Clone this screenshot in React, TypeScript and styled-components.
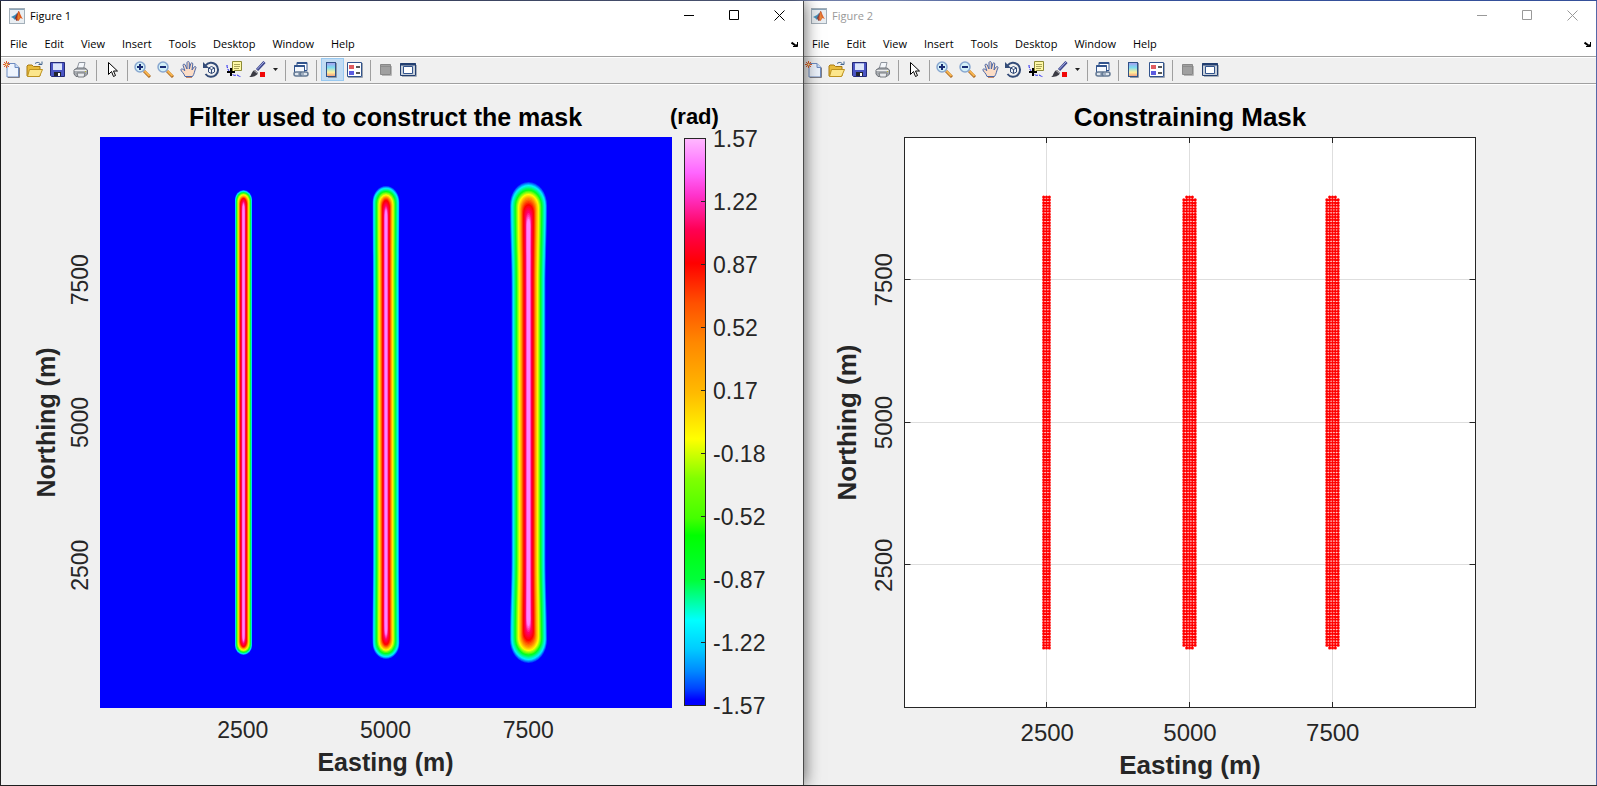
import type { ReactNode } from 'react';
import styled, { createGlobalStyle } from 'styled-components';

const GlobalStyle = createGlobalStyle`
  * {
    box-sizing: border-box;
  }

  body {
    margin: 0;
    background: #333;
    font-family: "Open Sans", "Noto Sans", sans-serif;
  }
`

const Desktop = styled.main`
  display: grid;
  grid-template-columns: 804fr 793fr;
  min-height: 100vh;
  padding: 1px 0;
  background: linear-gradient(to right, #35406a, #7482ac 56%, #35509a 65%, #35509a) top / 100% 1px no-repeat, #2b2b2b;
`

const FigureWindow = styled.section<{ $active?: boolean }>`
  display: flex;
  flex-direction: column;
  position: relative;
  z-index: ${({ $active }) => ($active ? 1 : 0)};
  min-width: 0;
  margin-left: ${({ $active }) => ($active ? '1px' : '-1px')};
  border-right: 1px solid ${({ $active }) => ($active ? '#4a4a4a' : '#5668a8')};
  background: #f0f0f0;
  box-shadow: ${({ $active }) => ($active ? '0 0 16px rgba(0, 0, 0, .65)' : 'none')};
`

const TitleBar = styled.header<{ $active?: boolean }>`
  display: flex;
  align-items: center;
  height: 29px;
  padding-left: 8px;
  background: #fff;
  color: ${({ $active }) => ($active ? '#000' : '#999')};
`

const WindowTitle = styled.h1`
  flex: 1;
  margin: 0;
  padding-left: 5px;
  font-size: 11px;
  font-weight: 400;
`

const WindowButton = styled.button`
  display: flex;
  justify-content: center;
  align-items: center;
  width: 45px;
  height: 29px;
  padding: 0 2px 0 0;
  border: none;
  background: transparent;
  color: inherit;

  &:hover {
    background: #e5e5e5;
  }
`

const MenuBar = styled.nav`
  display: flex;
  align-items: center;
  gap: 17px;
  height: 26px;
  padding: 2px 5px 0 9px;
  background: #fff;
`

const MenuButton = styled.button`
  padding: 0;
  border: none;
  background: transparent;
  font-family: inherit;
  font-size: 11px;
  line-height: 16px;
  color: #000;
`

const DockButton = styled.button`
  display: flex;
  margin-left: auto;
  padding: 0;
  border: none;
  background: transparent;
`

const ToolBar = styled.div`
  display: flex;
  align-items: center;
  height: 29px;
  border-top: 1px solid #a0a0a0;
  border-bottom: 1px solid #fff;
  background: #f0f0f0;
  box-shadow: inset 0 1px #fff, inset 0 -1px #a0a0a0;
`

const ToolButton = styled.button<{ $pressed?: boolean; $narrow?: boolean }>`
  display: flex;
  justify-content: center;
  align-items: center;
  width: ${({ $narrow }) => ($narrow ? '12px' : '23px')};
  height: 23px;
  margin-bottom: 2px;
  padding: 0 2px 0 0;
  border: 1px solid ${({ $pressed }) => ($pressed ? '#99c9f0' : 'transparent')};
  background: ${({ $pressed }) => ($pressed ? '#c2dcf3' : 'transparent')};

  &:hover {
    background: #d8e9f8;
  }
`

const Separator = styled.span`
  width: 1px;
  height: 21px;
  margin: 0 4px 0 3px;
  background: #a0a0a0;
`

const Chart = styled.svg`
  display: block;
  width: 100%;
  height: auto;
  font-family: "Liberation Sans", Arial, sans-serif;
`

const TickText = styled.text<{ $size: number }>`
  font-size: ${({ $size }) => $size}px;
  fill: #262626;
`

const LabelText = styled.text<{ $size: number; $title?: boolean }>`
  font-size: ${({ $size }) => $size}px;
  font-weight: 700;
  fill: ${({ $title }) => ($title ? '#000' : '#262626')};
`

const Icon = ({ children, size = 17 }: { children: ReactNode; size?: number }) => (
  <svg width={size} height={size} viewBox={`0 0 ${size} ${size}`} fill="none" aria-hidden="true">
    {children}
  </svg>
)

const MatlabIcon = ({ faded }: { faded?: boolean }) => (
  <Icon size={16}>
    <rect x=".5" y=".5" width="15" height="15" fill="#e9eef2" stroke="#a3afb9" />
    <path d="M1 1.500h14" stroke="#8ba4b8" />
    <g opacity={faded ? 0.9 : 1}>
      <path d="M2 9l4-2 2-2 1 3-3 4-2-2z" fill="#3987b5" />
      <path d="M6 10l2-4 1.500-3 1 1-1 8-2 1z" fill="#80302b" />
      <path d="M9.500 3c1.500 1 2.500 6 4.500 8l-2.500-1-2 3-2-2z" fill="#df5a1d" />
      <path d="M9.500 4l1 6-1 2z" fill="#f4a52d" />
    </g>
  </Icon>
)

const NewIcon = () => (
  <Icon>
    <path d="M4 2.500h8l3.500 3.500v10H4z" fill="#eef4fd" stroke="#6d8bc0" />
    <path d="M12 2.500v4h4" fill="#c5d9f4" stroke="#6d8bc0" />
    <path d="M16.500 6.500v10H5" stroke="#7d7d86" />
    <path d="M1 1l5 5M6 1L1 6M3.500 0v7M0 3.500h7" stroke="#e1602d" />
    <circle cx="3.500" cy="3.500" r="1.500" fill="#fff0a0" stroke="#d45a28" />
  </Icon>
)

const OpenIcon = () => (
  <Icon>
    <path d="M1 15V5l1-1h4l1.500 1.500H14V15z" fill="#e8bb3c" stroke="#a87a12" />
    <path d="M3.500 8.500h13L13.500 15.500h-12z" fill="#fce68b" stroke="#bd921f" />
    <path d="M9 2.500c3-2 5-1 5.500 1M12.500 3.500h3.500V.5" stroke="#41648e" />
  </Icon>
)

const SaveIcon = () => (
  <Icon>
    <path d="M1.500 1.500h14v14h-13l-1-1z" fill="#4b56c4" stroke="#252b78" />
    <path d="M4 2h9v7H4z" fill="#dce5fa" />
    <path d="M4 2h9v1H4z" fill="#a6b4ea" />
    <path d="M5 11h7v4H5z" fill="#22252f" />
    <path d="M9 12h2v3H9z" fill="#fff" />
  </Icon>
)

const PrintIcon = () => (
  <Icon>
    <path d="M5 8L7 1.500h6L11.500 8z" fill="#f4f7fb" stroke="#8f959e" />
    <path d="M2 9l3-2h8l2.500 2v4L13 15.500H4L2 13z" fill="#a9adb2" stroke="#6d7177" />
    <path d="M2.500 9.500h12" stroke="#ededed" />
    <path d="M5 12h8l-1 4H6z" fill="#e8eaed" stroke="#797c80" />
    <path d="M13 10.500h1" stroke="#c5bd2e" />
  </Icon>
)

const PointerIcon = () => (
  <Icon>
    <path d="M5.500 1.500v12l3-3 2 5 2-1-2-4.500h4z" fill="#fff" stroke="#000" />
  </Icon>
)

const ZoomIcon = ({ plus }: { plus?: boolean }) => (
  <Icon>
    <path d="M10 10l6 6" stroke="#a96720" strokeWidth="3" />
    <path d="M10.500 10l5 5" stroke="#f7b44e" strokeWidth="2" />
    <circle cx="6" cy="6" r="5" fill="#d3f0f7" stroke="#88a7d0" strokeWidth="1.500" />
    <path d={plus ? 'M3 6h6M6 3v6' : 'M3 6h6'} stroke="#182c74" strokeWidth="2" />
  </Icon>
)

const HandIcon = () => (
  <Icon>
    <path
      d="M5 15.500C4 12 1 10.500.8 8.500c.8-1 2.200-.5 4 1.200L3 4.200c.2-1.500 1.700-1.500 2.200-.2L7 8V1.500c.5-1.300 2-1.200 2.300 0V8l1.500-5.500c.6-1 2-.8 2 .5L12 9l2.300-3.200c1-.8 2 .2 1.600 1.200C14.500 9.500 14.500 13 12.500 15.500z"
      fill="#fbdcc5"
      stroke="#4a66a6"
    />
    <path d="M6 16.500h6" stroke="#c48869" />
  </Icon>
)

const RotateIcon = () => (
  <Icon>
    <path d="M2.500 4.500A7 7 0 1 1 2.500 13" stroke="#344c78" strokeWidth="2" />
    <path d="M0 1v6h6z" fill="#344c78" />
    <path d="M5.500 7l3-1.500 3 1.500v4l-3 1.500-3-1.500zM5.500 7l3 1.500 3-1.500M8.500 8.500v4" fill="#eef2f8" stroke="#344c78" />
  </Icon>
)

const DataTipIcon = () => (
  <Icon>
    <path d="M6.500.5h9v9h-7l-2 2z" fill="#fff9a6" stroke="#8d8a35" />
    <path d="M8 3.500h6M8 5.500h6M8 7.500h5" stroke="#a7a358" />
    <path d="M1 4c0 3 1 5 3 7 2 3 5 4 6 3s3 2 5 1.500" stroke="#1717f0" strokeDasharray="3 1" />
    <path d="M1 11h8M5 7v8" stroke="#000" strokeWidth="2" />
  </Icon>
)

const BrushIcon = () => (
  <Icon>
    <path d="M15.500 1L8 9" stroke="#3c458c" strokeWidth="3" />
    <path d="M15 1L8 8.500" stroke="#aab3e6" />
    <path d="M0 16c3-1 2-6 6-7l3 3c-1 3-5 4-9 4z" fill="#3b3b43" />
    <path d="M5 9.500l3.500 3" stroke="#bcbcc4" />
    <path d="M11 11h5v5h-5z" fill="#f00808" />
  </Icon>
)

const LinkIcon = () => (
  <Icon>
    <path d="M5 1.500h10v8H5z" fill="#fff" stroke="#32548d" />
    <path d="M2.500 4.500h10v7h-10z" fill="#f6f9fd" stroke="#32548d" />
    <path d="M5 2h10M2.500 5h10" stroke="#32548d" strokeWidth="2" />
    <rect x="2" y="11" width="8" height="4" rx="2" fill="#dfe6ee" stroke="#637893" strokeWidth="1.500" />
    <rect x="8" y="11" width="8" height="4" rx="2" fill="#dfe6ee" stroke="#637893" strokeWidth="1.500" />
    <path d="M6 13h6" stroke="#637893" />
  </Icon>
)

const ColorbarIcon = () => (
  <Icon>
    <defs>
      <linearGradient id="miniBar" x2="0" y2="1">
        <stop offset="0" stopColor="#a99af0" />
        <stop offset=".35" stopColor="#7bdcf0" />
        <stop offset=".7" stopColor="#fff19d" />
        <stop offset="1" stopColor="#f2987c" />
      </linearGradient>
    </defs>
    <path d="M13.500 2v14.500H5" stroke="#8f98a6" />
    <rect x="3.500" y="1.500" width="9" height="14" fill="url(#miniBar)" stroke="#2f5287" />
  </Icon>
)

const LegendIcon = () => (
  <Icon>
    <path d="M16.500 2v14.500H2" stroke="#9aa2ae" />
    <path d="M1.500 1.500h14v14h-14z" fill="#fff" stroke="#32548d" />
    <path d="M3 4h5v4H3z" fill="#e05c60" />
    <path d="M3 10h5v4H3z" fill="#5c5ce0" />
    <path d="M10 6h4M10 12h4" stroke="#222" strokeWidth="1.500" />
  </Icon>
)

const HideToolsIcon = () => (
  <Icon>
    <path d="M14.500 5v9.500H5" stroke="#b7b7b7" />
    <path d="M3.500 3.500h10v10h-10z" fill="#a0a0a0" stroke="#888" />
    <path d="M4 5.500h9" stroke="#8d8d8d" />
  </Icon>
)

const ShowToolsIcon = () => (
  <Icon>
    <path d="M.5 2.500h15v12H.5z" fill="#c8d0da" stroke="#233f70" />
    <path d="M0 3.500h16" stroke="#233f70" strokeWidth="2" />
    <path d="M3.500 5.500h9v7h-9z" fill="#fff" stroke="#32548d" />
    <path d="M16.500 4v11.500H2" stroke="#a8b0bb" />
  </Icon>
)

const CaretIcon = () => (
  <Icon size={7}>
    <path d="M1 2h5L3.500 5z" fill="#222" />
  </Icon>
)

const DockIcon = () => (
  <Icon size={7}>
    <path d="M.5 1.500l4 3" stroke="#000" strokeWidth="2" />
    <path d="M6.500 1v4.500H2" stroke="#000" />
    <path d="M6.500 2.500v3H3z" fill="#000" />
  </Icon>
)

const menus = ['File', 'Edit', 'View', 'Insert', 'Tools', 'Desktop', 'Window', 'Help']

type WindowProps = {
  title: string
  active?: boolean
  colorbar?: boolean
  children: ReactNode
}

const Figure = ({ title, active, colorbar, children }: WindowProps) => (
  <FigureWindow $active={active}>
    <TitleBar $active={active}>
      <MatlabIcon faded={!active} />
      <WindowTitle>{title}</WindowTitle>
      <WindowButton aria-label="Minimize">
        <Icon size={11}><path d="M0 5.500h10" stroke="currentColor" /></Icon>
      </WindowButton>
      <WindowButton aria-label="Maximize">
        <Icon size={11}><path d="M.5.5h9v9h-9z" stroke="currentColor" /></Icon>
      </WindowButton>
      <WindowButton aria-label="Close">
        <Icon size={11}><path d="M.5.5l10 10M10.500.5l-10 10" stroke="currentColor" /></Icon>
      </WindowButton>
    </TitleBar>

    <MenuBar>
      {menus.map((menu) => <MenuButton key={menu}>{menu}</MenuButton>)}
      <DockButton aria-label="Dock figure"><DockIcon /></DockButton>
    </MenuBar>

    <ToolBar role="toolbar">
      <ToolButton aria-label="New figure"><NewIcon /></ToolButton>
      <ToolButton aria-label="Open file"><OpenIcon /></ToolButton>
      <ToolButton aria-label="Save figure"><SaveIcon /></ToolButton>
      <ToolButton aria-label="Print figure"><PrintIcon /></ToolButton>
      <Separator />
      <ToolButton aria-label="Edit plot"><PointerIcon /></ToolButton>
      <Separator />
      <ToolButton aria-label="Zoom in"><ZoomIcon plus /></ToolButton>
      <ToolButton aria-label="Zoom out"><ZoomIcon /></ToolButton>
      <ToolButton aria-label="Pan"><HandIcon /></ToolButton>
      <ToolButton aria-label="Rotate 3D"><RotateIcon /></ToolButton>
      <ToolButton aria-label="Data cursor"><DataTipIcon /></ToolButton>
      <ToolButton aria-label="Brush data"><BrushIcon /></ToolButton>
      <ToolButton aria-label="Brush options" $narrow><CaretIcon /></ToolButton>
      <Separator />
      <ToolButton aria-label="Link plot"><LinkIcon /></ToolButton>
      <Separator />
      <ToolButton aria-label="Insert colorbar" aria-pressed={!!colorbar} $pressed={colorbar}><ColorbarIcon /></ToolButton>
      <ToolButton aria-label="Insert legend"><LegendIcon /></ToolButton>
      <Separator />
      <ToolButton aria-label="Hide plot tools"><HideToolsIcon /></ToolButton>
      <ToolButton aria-label="Show plot tools"><ShowToolsIcon /></ToolButton>
    </ToolBar>

    {children}
  </FigureWindow>
)

const SIDE = 571
const TOP = 52
const ticks = [2500, 5000, 7500]

type AxesProps = {
  left: number
  size: number
  tickX: number
  tickY: number
  labelX: number
  labelY: number
  title: string
}

// tickX / labelX are the baselines of the rotated texts, tickY / labelY those under the plot
const AxesText = ({ left, size, tickX, tickY, labelX, labelY, title }: AxesProps) => {
  const middle = left + SIDE / 2
  const half = TOP + SIDE / 2

  return (
    <g textAnchor="middle">
      <LabelText $size={size + 2} $title x={middle} y="41">{title}</LabelText>
      {ticks.map((tick) => (
        <TickText key={tick} $size={size} x={left + (SIDE * tick) / 10000} y={tickY}>{tick}</TickText>
      ))}
      {ticks.map((tick) => (
        <TickText key={tick} $size={size} transform={`translate(${tickX} ${TOP + SIDE - (SIDE * tick) / 10000}) rotate(-90)`}>
          {tick}
        </TickText>
      ))}
      <LabelText $size={size + 2} x={middle} y={labelY}>Easting (m)</LabelText>
      <LabelText $size={size + 2} transform={`translate(${labelX} ${half}) rotate(-90)`}>Northing (m)</LabelText>
    </g>
  )
}

type Rgb = [number, number, number]

const colorScale: [number, string][] = [
  [0, '#ffb8ff'], [6, '#ff66ff'], [10, '#ff33cc'], [16, '#ff0055'], [22, '#ff0000'],
  [29, '#ff5000'], [36, '#ff8800'], [45, '#ffbb00'], [53, '#ffff00'], [60, '#80ff00'],
  [67, '#44ff00'], [70, '#00ff00'], [78, '#00ff3c'], [85, '#00ffff'], [90, '#00ccff'],
  [94, '#0088ff'], [97, '#0044ff'], [99, '#0000ff'], [100, '#0000ff'],
]

// outside to inside: colour, half width, distance of the tip from the top of the plot
type Level = [Rgb, number, number]
type Ridge = { x: number; flare: number; round: number; levels: Level[] }

const BLUE: Rgb = [0, 60, 255]
const CYAN: Rgb = [0, 240, 255]
const GREEN: Rgb = [0, 255, 30]
const YELLOW: Rgb = [255, 255, 0]
const ORANGE: Rgb = [255, 140, 0]
const RED: Rgb = [255, 0, 0]
const MAGENTA: Rgb = [255, 0, 110]
const PINK: Rgb = [255, 130, 255]

const ridges: Ridge[] = [
  {
    x: 143.5, flare: 0, round: 0.9,
    levels: [[BLUE, 8.5, 53], [CYAN, 8, 54], [GREEN, 7, 55.5], [YELLOW, 5.5, 57.5], [ORANGE, 4.3, 59.5], [RED, 3.2, 61], [MAGENTA, 1.8, 64], [PINK, 1, 67]],
  },
  {
    x: 286, flare: 0.5, round: 1.1,
    levels: [[BLUE, 13, 49], [CYAN, 12, 51], [GREEN, 9.5, 54], [YELLOW, 7, 57.5], [ORANGE, 5.2, 60], [RED, 3.6, 63], [MAGENTA, 2, 68], [PINK, 1.2, 73]],
  },
  {
    x: 428.5, flare: 1.5, round: 1.2,
    levels: [[BLUE, 17, 45], [CYAN, 15.5, 48], [GREEN, 12.5, 52.5], [YELLOW, 9.5, 57], [ORANGE, 7, 61], [RED, 4.8, 67], [MAGENTA, 2.7, 74], [PINK, 1.6, 82]],
  },
]

const mix = (a: number, b: number, t: number) => a + (b - a) * t

const ridgePath = (x: number, w: number, tip: number, flare: number, round: number) => {
  const wide = w + (flare * w) / 17
  // the narrow inner levels end in a longer point
  const cap = wide * round + 16 / (1 + wide)
  const shoulder = tip + cap
  const low = SIDE - shoulder
  return [
    `M${x - w} 150`,
    `C${x - w} 120 ${x - wide} 100 ${x - wide} ${shoulder}`,
    `A${wide} ${cap} 0 0 1 ${x + wide} ${shoulder}`,
    `C${x + wide} 100 ${x + w} 120 ${x + w} 150`,
    `V${SIDE - 150}`,
    `C${x + w} ${SIDE - 120} ${x + wide} ${SIDE - 100} ${x + wide} ${low}`,
    `A${wide} ${cap} 0 0 1 ${x - wide} ${low}`,
    `C${x - wide} ${SIDE - 100} ${x - w} ${SIDE - 120} ${x - w} ${SIDE - 150}z`,
  ].join('')
}

const STEPS = 4

const RidgeShape = ({ x, flare, round, levels }: Ridge) => (
  <g>
    {levels.slice(0, -1).flatMap(([color, w, tip], i) => {
      const [nextColor, nextW, nextTip] = levels[i + 1]
      return Array.from({ length: STEPS }, (_, step) => {
        const t = step / STEPS
        const rgb = color.map((c, n) => Math.round(mix(c, nextColor[n], t)))
        return (
          <path
            key={`${i}-${step}`}
            d={ridgePath(x, mix(w, nextW, t), mix(tip, nextTip, t), flare, round)}
            fill={`rgb(${rgb.join(',')})`}
          />
        )
      })
    })}
    <path d={ridgePath(x, levels[7][1], levels[7][2], flare, round)} fill={`rgb(${levels[7][0].join(',')})`} />
  </g>
)

const barTicks = ['1.57', '1.22', '0.87', '0.52', '0.17', '-0.18', '-0.52', '-0.87', '-1.22', '-1.57']

const FilterChart = () => (
  <Chart viewBox="0 0 802 700" role="img" aria-label="Filter used to construct the mask">
    <defs>
      <linearGradient id="filterScale" x2="0" y2="1">
        {colorScale.map(([at, color]) => <stop key={at} offset={`${at}%`} stopColor={color} />)}
      </linearGradient>
    </defs>

    <AxesText left={99} size={23} tickX={87} tickY={653} labelX={54} labelY={686} title="Filter used to construct the mask" />

    <rect x="99" y={TOP} width={SIDE + 1} height={SIDE} fill="#00f" />
    <g transform={`translate(99 ${TOP})`}>
      {ridges.map((ridge) => <RidgeShape key={ridge.x} {...ridge} />)}
    </g>

    <LabelText $size={22} $title x="669" y="39">(rad)</LabelText>
    <rect x="683.5" y="53.5" width="21" height="567" fill="url(#filterScale)" stroke="#262626" />
    {barTicks.map((tick, i) => {
      const y = Math.round(53 + i * 63) + 0.5
      return (
        <g key={tick}>
          <path d={`M700 ${y}h5`} stroke="#262626" />
          <TickText $size={23} x="712" y={y + 8.5}>{tick}</TickText>
        </g>
      )
    })}
  </Chart>
)

const LEFT = 101.5
const CELL = SIDE / 200
const maskColumns = [[3, 3], [5, 3], [5, 3]]

const maskPath = (center: number, columns: number, endColumns: number) => {
  let d = ''
  for (let row = 0; row < 159; row++) {
    const count = row === 0 || row === 158 ? endColumns : columns
    for (let col = 0; col < count; col++) {
      const x = center + (col - (count - 1) / 2) * CELL
      d += `M${x.toFixed(2)} ${(112 + row * CELL).toFixed(2)}h.01`
    }
  }
  return d
}

const MaskChart = () => (
  <Chart viewBox="0 0 793 700" role="img" aria-label="Constraining Mask">
    <AxesText left={LEFT} size={24} tickX={89} tickY={656} labelX={53} labelY={689} title="Constraining Mask" />

    <rect x={LEFT} y={TOP + 0.5} width={SIDE} height={SIDE - 1} fill="#fff" />
    {ticks.map((tick) => {
      const x = Math.round(LEFT + (SIDE * tick) / 10000) - 0.5
      const y = Math.round(TOP + SIDE - (SIDE * tick) / 10000) - 0.5
      return (
        <g key={tick}>
          <path d={`M${x} ${TOP}v${SIDE}M${LEFT} ${y}h${SIDE}`} stroke="#dedede" />
          <path d={`M${x} ${TOP}v6M${x} ${TOP + SIDE}v-6M${LEFT} ${y}h6M${LEFT + SIDE} ${y}h-6`} stroke="#262626" />
        </g>
      )
    })}
    <rect x={LEFT} y={TOP + 0.5} width={SIDE} height={SIDE - 1} fill="none" stroke="#262626" />

    {maskColumns.map(([columns, endColumns], i) => (
      <path
        key={i}
        d={maskPath(243.5 + i * 143, columns, endColumns)}
        stroke="#f00"
        strokeWidth="3"
        strokeLinecap="round"
      />
    ))}
  </Chart>
)

const App = () => (
  <>
    <GlobalStyle />
    <Desktop>
      <Figure title="Figure 1" active colorbar>
        <FilterChart />
      </Figure>
      <Figure title="Figure 2">
        <MaskChart />
      </Figure>
    </Desktop>
  </>
)

export default App
